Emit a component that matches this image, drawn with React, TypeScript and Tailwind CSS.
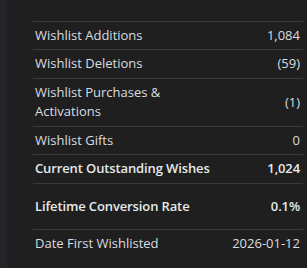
const rows = [
  { label: "Wishlist Additions", value: "1,084", pad: "pt-[4px] pb-[4px]" },
  { label: "Wishlist Deletions", value: "(59)", pad: "pt-[4px] pb-[5px]" },
  { label: "Wishlist Purchases & Activations", value: "(1)", pad: "pt-[4px] pb-[5px]", wrap: true },
  { label: "Wishlist Gifts", value: "0", pad: "pt-[4px] pb-[4px]" },
];

const App = () => {
  return (
    <div
      className="flex w-[307px] h-[268px] bg-[#1f1f1f] text-[13px] text-[#d9dde0]"
      style={{ fontFamily: '"Open Sans", "Liberation Sans", sans-serif' }}
    >
      <div className="w-[7px] bg-[#242528]" />
      <div className="flex-1 pt-[21px] pl-[26px] pr-[4px]">
        <div className="flex flex-col">
          {rows.map((r) => (
            <div
              key={r.label}
              className={`flex items-center justify-between border-t border-[#3a3a3a] pl-[2px] pr-[3px] leading-[19px] ${r.pad}`}
            >
              <span className={r.wrap ? "w-[150px]" : ""}>{r.label}</span>
              <span>{r.value}</span>
            </div>
          ))}
          <div className="flex items-center justify-between border-t border-[#3a3a3a] pl-[2px] pr-[3px] pt-[4px] pb-[5px] leading-[19px] font-semibold tracking-[-0.12px] text-[#e6e9eb]">
            <span>Current Outstanding Wishes</span>
            <span>1,024</span>
          </div>
          <div className="flex items-center justify-between border-t border-[#3a3a3a] pl-[2px] pr-[3px] py-[13px] leading-[19px] font-semibold tracking-[-0.12px] text-[#e6e9eb]">
            <span>Lifetime Conversion Rate</span>
            <span>0.1%</span>
          </div>
          <div className="flex items-center justify-between border-t border-[#3a3a3a] pl-[2px] pr-[3px] pt-[4px] pb-[5px] leading-[19px]">
            <span>Date First Wishlisted</span>
            <span>2026-01-12</span>
          </div>
        </div>
      </div>
    </div>
  );
};

export default App;
